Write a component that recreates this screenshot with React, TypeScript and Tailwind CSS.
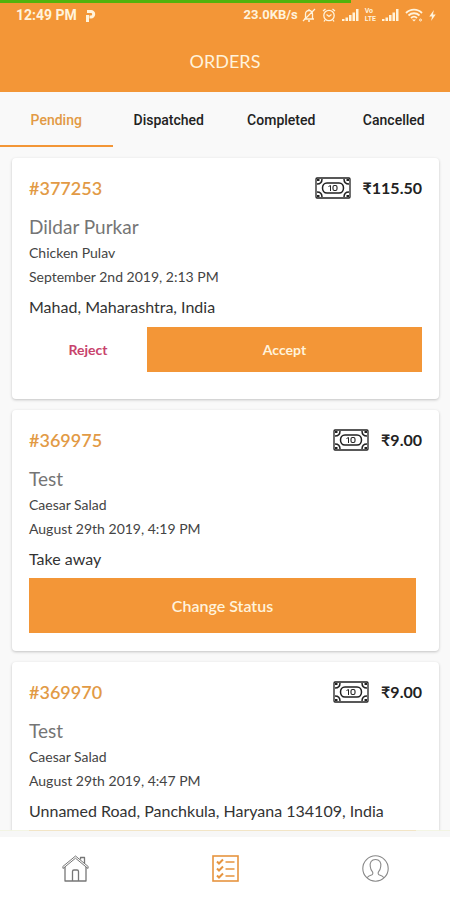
import { useState } from "react";
import clsx from "clsx";

type Order = {
  id: string;
  price: string;
  customer: string;
  item: string;
  date: string;
  address: string;
  isNew: boolean;
};

const tabs = ["Pending", "Dispatched", "Completed", "Cancelled"];

const orders: Order[] = [
  {
    id: "#377253",
    price: "₹115.50",
    customer: "Dildar Purkar",
    item: "Chicken Pulav",
    date: "September 2nd 2019, 2:13 PM",
    address: "Mahad, Maharashtra, India",
    isNew: true,
  },
  {
    id: "#369975",
    price: "₹9.00",
    customer: "Test",
    item: "Caesar Salad",
    date: "August 29th 2019, 4:19 PM",
    address: "Take away",
    isNew: false,
  },
  {
    id: "#369970",
    price: "₹9.00",
    customer: "Test",
    item: "Caesar Salad",
    date: "August 29th 2019, 4:47 PM",
    address: "Unnamed Road, Panchkula, Haryana 134109, India",
    isNew: false,
  },
];

const CashIcon = () => (
  <svg width="36" height="22" viewBox="0 0 36 22" fill="none" stroke="#222" aria-hidden="true">
    <rect x="1" y="1" width="34" height="20" rx="1" strokeWidth="1.3" />
    <path d="M2 7c3 0 5-2 5-5M34 7c-3 0-5-2-5-5M2 15c3 0 5 2 5 5M34 15c-3 0-5 2-5 5" strokeWidth="1.5" />
    <path d="M2 3h2.500M31.500 3H34M2 19h2.500M31.500 19H34" strokeWidth="2" />
    <path d="M12 6h12c3 0 4.500 2.500 4.500 5S27 16 24 16H12c-3 0-4.500-2.500-4.500-5S9 6 12 6z" strokeWidth="1.500" />
    <path d="M13.500 9.500l2-1V14" strokeWidth="1" />
    <rect x="18" y="8.500" width="4" height="5" rx="1.500" strokeWidth="1.100" />
  </svg>
);

const SignalIcon = () => (
  <svg width="17" height="12" viewBox="0 0 17 12" fill="currentColor" aria-hidden="true">
    <path d="M0 10h2.500v2H0zM3.500 8.500H6V12H3.500zM7 6h2.500v6H7zM10.500 3.500H13V12h-2.500zM14 0h2.500v12H14z" />
  </svg>
);

const StatusBar = () => (
  <div className="flex h-[30px] items-center justify-between pl-4 pr-[14px] text-[#fff3dc]">
    <div className="flex items-center gap-2">
      <span className="text-[14px] font-bold">12:49 PM</span>
      <svg width="11" height="13" viewBox="0 0 11 13" fill="none" stroke="currentColor" strokeWidth="3" aria-hidden="true">
        <path d="M2.500 13V6M2 2.500h4a2.700 2.700 0 0 1 0 5.400H4.500" />
      </svg>
    </div>
    <div className="flex items-center gap-[6px]">
      <span className="text-[13px] font-bold">23.0KB/s</span>
      <svg className="-ml-0.5" width="14" height="14" viewBox="0 0 14 14" fill="none" stroke="currentColor" strokeWidth="1.3" aria-hidden="true">
        <path d="M2 11h10M3.500 11V6a3.500 3.500 0 0 1 7 0v5M7 1v1.500M6 13h2M1 13L13 1" />
      </svg>
      <svg width="14" height="14" viewBox="0 0 14 14" fill="none" stroke="currentColor" strokeWidth="1.3" aria-hidden="true">
        <circle cx="7" cy="7.500" r="5.200" />
        <path d="M4.500 6.500L7 8.500l2.500-2M1 3l2.500-2M13 3l-2.500-2M3 12l-1 1.500M11 12l1 1.500" />
      </svg>
      <SignalIcon />
      <span className="flex flex-col text-[7px] font-bold leading-[8px]">
        <span>Vo</span>
        <span>LTE</span>
      </span>
      <SignalIcon />
      <svg width="18" height="14" viewBox="0 0 18 14" fill="none" stroke="currentColor" strokeWidth="1.8" aria-hidden="true">
        <path d="M1 5c4.500-4.600 11.500-4.600 16 0M3.500 7.500c3.200-3 7.800-3 11 0M6 10c1.800-1.600 4.200-1.600 6 0" />
        <path d="M7 11.500h4L9 13.500z" fill="currentColor" stroke="none" />
        <circle cx="15.500" cy="12" r="1" strokeWidth="1" />
      </svg>
      <svg width="7" height="11" viewBox="0 0 7 12" fill="currentColor" aria-hidden="true">
        <path d="M5 0L0 7h3L2 12l5-7H4z" />
      </svg>
    </div>
  </div>
);

const OrderCard = ({ order }: { order: Order }) => (
  <article className="rounded-sm bg-white px-[17px] pb-[18px] pt-[17px] shadow-[0_1px_3px_rgba(0,0,0,0.22)]">
    <div className="flex items-center justify-between leading-[26px]">
      <h2 className="text-[18px] font-semibold text-[#e29a45]">{order.id}</h2>
      <div className="flex items-center gap-3">
        <CashIcon />
        <span className="text-[16px] font-bold text-[#222]">{order.price}</span>
      </div>
    </div>
    <p className="mt-3 text-[19px] leading-7 text-[#757575]">{order.customer}</p>
    <p className="text-[14px] leading-6 text-[#444]">{order.item}</p>
    <p className="text-[14px] leading-6 text-[#444]">{order.date}</p>
    <p className="mt-[6px] text-[16px] leading-6 text-[#333]">{order.address}</p>
    {order.isNew ? (
      <div className="mb-[9px] mt-2 flex h-[45px]">
        <button className="w-[30%] text-[14px] font-bold text-[#c8436c]">Reject</button>
        <button className="flex-1 bg-[#f39637] text-[14px] font-bold text-[#fff3dc]">Accept</button>
      </div>
    ) : (
      <div className="mt-[7px] pr-[6px]">
        <button className="h-[55px] w-full bg-[#f39637] text-[16px] font-semibold text-[#fff3dc]">
          Change Status
        </button>
      </div>
    )}
  </article>
);

const App = () => {
  const [activeTab, setActiveTab] = useState("Pending");

  return (
    <div className="flex h-screen flex-col bg-[#f9f9f9] font-['Lato','Noto_Sans',sans-serif]">
      <header className="relative h-[92px] shrink-0 bg-[#f39637] font-['Roboto',sans-serif]">
        {/* Loading progress */}
        <div className="absolute left-0 top-0 h-[3px] w-[78%] bg-[#52b30c]" />
        <StatusBar />
        <h1 className="text-center font-['Lato',sans-serif] text-[18px] leading-[62px] text-[#fff3dc]">ORDERS</h1>
      </header>

      <nav className="grid h-[55px] shrink-0 grid-cols-4 font-['Roboto',sans-serif]">
        {tabs.map((tab) => (
          <button
            key={tab}
            onClick={() => setActiveTab(tab)}
            className={clsx(
              "border-b-2 pt-1 text-[14px] font-medium",
              activeTab === tab
                ? "border-[#f39637] text-[#e29a45]"
                : "border-transparent text-[#222]"
            )}
          >
            {tab}
          </button>
        ))}
      </nav>

      <div className="relative min-h-0 flex-1">
        <main className="h-full overflow-y-auto [scrollbar-width:none]">
          <div className="flex flex-col gap-[11px] pb-3 pl-3 pr-[11px] pt-[11px]">
            {orders.map((order) => (
              <OrderCard key={order.id} order={order} />
            ))}
          </div>
        </main>
        {/* Soft edge over the scrolling list */}
        <div className="pointer-events-none absolute inset-x-0 bottom-0 h-px bg-[#f1f3df]/85" />
      </div>

      {/* Bottom navigation */}
      <nav className="grid h-[69px] shrink-0 grid-cols-3 border-t-[6px] border-[#f7f7f7] bg-white">
        <button aria-label="Home" className="flex items-center justify-center">
          <svg width="27" height="27" viewBox="0 0 27 27" fill="none" stroke="#777" strokeWidth="1.300" strokeLinejoin="round" aria-hidden="true">
            <path d="M3 12v14h21V12" />
            <path d="M1 13.500L.8 11.500 13.500 1 26.200 11.500 26 13.500 13.500 3.200z" strokeWidth="1" />
            <path d="M18.500 4.500V2.500h4v6M10.500 26V16.500a1.500 1.500 0 0 1 1.500-1.500h3a1.500 1.500 0 0 1 1.500 1.500V26" />
          </svg>
        </button>
        <button aria-label="Orders" className="flex items-center justify-center">
          <svg width="27" height="27" viewBox="0 0 27 27" fill="none" stroke="#e6943f" strokeWidth="1.600" aria-hidden="true">
            <rect x="1" y="1" width="25" height="25" />
            <path d="M5 6.500l2 2 4-4M5 13.500l2 2 4-4M5 20.500l2 2 4-4" strokeWidth="2" />
            <path d="M13.500 7h9M13.500 14h9M13.500 21h9" />
          </svg>
        </button>
        <button aria-label="Profile" className="flex items-center justify-center">
          <svg width="27" height="27" viewBox="0 0 27 27" fill="none" stroke="#888" strokeWidth="1.100" strokeLinejoin="round" aria-hidden="true">
            <circle cx="13.500" cy="13.500" r="12.700" />
            <path d="M5 22.800c1-1.500 3-2.300 5-3 1-.4 1-2 .5-3-1.500-1.500-2-3-2.200-5C7.500 7.500 9.500 4.500 13.500 4.500s6 3 5.200 7.300c-.2 2-.7 3.500-2.200 5-.5 1-.5 2.600.5 3 2 .7 4 1.500 5 3" />
          </svg>
        </button>
      </nav>
    </div>
  );
};

export default App;
